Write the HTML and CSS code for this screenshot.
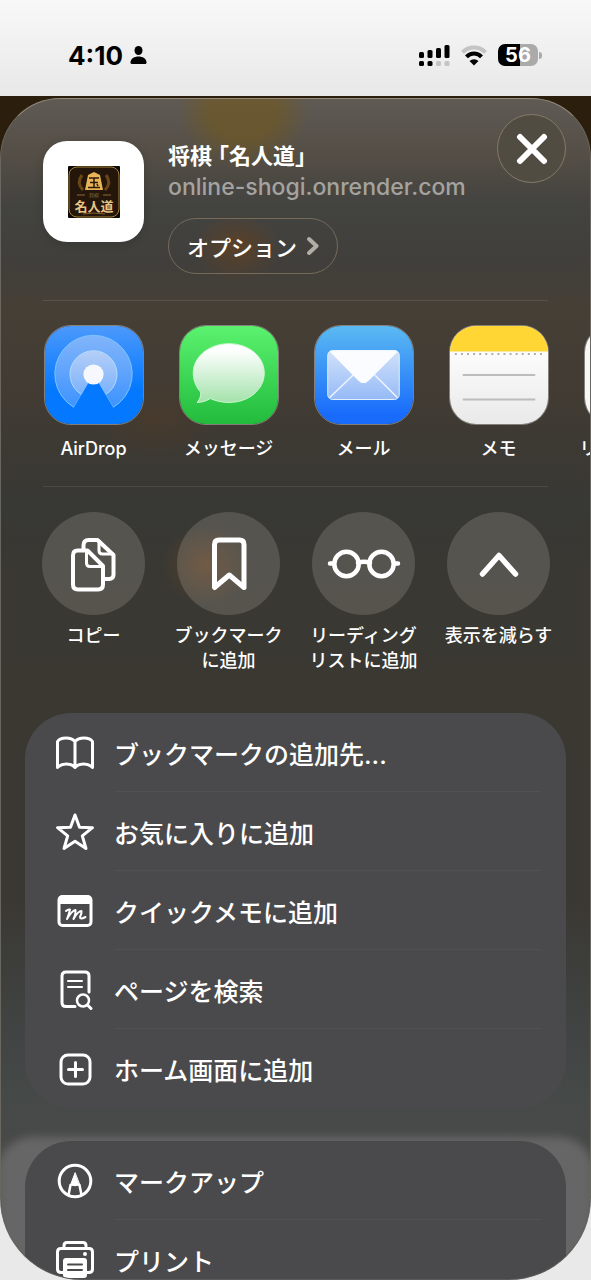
FILE: index.html
```html
<!DOCTYPE html>
<html lang="ja">
<head>
    <meta charset="UTF-8">
    <meta name="viewport" content="width=device-width, initial-scale=1.0">
    <title>将棋「名人道」</title>
    <link rel="stylesheet" href="styles.css">
</head>
<body>
    <!-- Status bar -->
    <div class="status-bar">
        <div class="status-left">
            <span class="time">4:10</span>
            <svg width="17" height="20" viewBox="0 0 16 20">
                <ellipse cx="8" cy="5.500" rx="4" ry="4.600"></ellipse>
                <path d="M0 17.500C0 13.500 4 11.500 8 11.500s8 2 8 6q0 1.500-1.500 1.500H1.500Q0 19 0 17.500z"></path>
            </svg>
        </div>
        <div class="status-right">
            <svg width="32" height="24" viewBox="0 0 32 24">
                <rect x="1" y="9" width="5" height="6" rx="1.500"></rect>
                <rect x="9.500" y="7" width="5" height="8" rx="1.500"></rect>
                <rect x="18" y="5" width="5" height="10" rx="1.500"></rect>
                <rect x="26.500" y="2" width="5" height="13" rx="1.500"></rect>
                <rect x="1" y="18" width="5" height="5" rx="1.500"></rect>
                <rect x="9.500" y="18" width="5" height="5" rx="1.500"></rect>
                <rect class="dim" x="18" y="18" width="5" height="5" rx="1.500"></rect>
                <rect class="dim" x="26.500" y="18" width="5" height="5" rx="1.500"></rect>
            </svg>
            <svg width="28" height="22" viewBox="0 0 26 22">
                <path class="wifi wifi-dim" d="M1.500 8.300a16 16 0 0 1 23 0"></path>
                <path class="wifi" d="M5.500 12.800a10.200 10.200 0 0 1 15 0"></path>
                <path d="M13 21.500l-4.500-4.500a6.400 6.400 0 0 1 9 0z"></path>
            </svg>
            <div class="battery"><span>56</span></div>
        </div>
    </div>

    <!-- Share sheet -->
    <main class="sheet">
        <button class="close" type="button" aria-label="閉じる">
            <svg width="32" height="32" viewBox="0 0 32 32"><path d="M4 4l24 24M28 4L4 28"></path></svg>
        </button>

        <header class="site">
            <div class="site-icon">
                <svg width="52" height="52" viewBox="0 0 52 52">
                    <rect width="52" height="52" rx="1" fill="#0b0805"></rect>
                    <rect x="1" y="1" width="50" height="50" rx="8" fill="#24160b" stroke="#a4803a"></rect>
                    <path d="M14 9q-6 8 1 15M38 9q6 8-1 15" fill="none" stroke="#6b4717" stroke-width="3"></path>
                    <path d="M26 6l6 3 3 15H17l3-15z" fill="#e9b458"></path>
                    <path d="M21 12h10M22 16.500h8M20 21.500h12M26 12v9M29 18l1 2" stroke="#2a1808" stroke-width="1.500"></path>
                    <path d="M9 29h8M35 29h8" stroke="#8d6b35"></path>
                    <text x="26" y="31" class="thumb-small">将棋</text>
                    <text x="26" y="45" class="thumb-name">名人道</text>
                    <path d="M15 48q11-2 22 0" fill="none" stroke="#8a6128"></path>
                </svg>
            </div>
            <div class="site-info">
                <h1>将棋<span class="quoted">「名人道」</span></h1>
                <p>online-shogi.onrender.com</p>
                <button class="options" type="button">
                    オプション
                    <svg width="12" height="20" viewBox="0 0 12 20"><path d="M2 3l7.500 7L2 17"></path></svg>
                </button>
            </div>
        </header>

        <!-- Apps -->
        <div class="strip apps">
            <button class="item" type="button">
                <svg class="app-icon" viewBox="0 0 100 100">
                    <defs>
                        <linearGradient id="airdrop-bg" x1="0" y1="0" x2="0" y2="1">
                            <stop offset="0" stop-color="#4c99fb"></stop>
                            <stop offset="0.650" stop-color="#0479ff"></stop>
                        </linearGradient>
                        <linearGradient id="airdrop-outer" x1="0" y1="0" x2="0" y2="1">
                            <stop offset="0" stop-color="#82b5fa"></stop>
                            <stop offset="1" stop-color="#3d93ff"></stop>
                        </linearGradient>
                        <linearGradient id="airdrop-mid" x1="0" y1="0" x2="0" y2="1">
                            <stop offset="0" stop-color="#b5cef7"></stop>
                            <stop offset="1" stop-color="#7bb2fb"></stop>
                        </linearGradient>
                    </defs>
                    <rect width="100" height="100" fill="url(#airdrop-bg)"></rect>
                    <path d="M49.500 49L29.500 83A39.500 39.500 0 1 1 69.500 83z" fill="url(#airdrop-outer)" stroke="#7cc5ff"></path>
                    <path d="M49.500 49L37.500 70A24 24 0 1 1 61.500 70z" fill="url(#airdrop-mid)" stroke="#b3dcff"></path>
                    <path d="M49.500 49L29 84H70z" fill="#0479ff"></path>
                    <circle cx="49.500" cy="49.500" r="10.300" fill="#f6f8fe"></circle>
                </svg>
                <span class="label">AirDrop</span>
            </button>
            <button class="item" type="button">
                <svg class="app-icon" viewBox="0 0 100 100">
                    <defs>
                        <linearGradient id="messages-bg" x1="0" y1="0" x2="0" y2="1">
                            <stop offset="0" stop-color="#5bf26f"></stop>
                            <stop offset="1" stop-color="#22bb3c"></stop>
                        </linearGradient>
                        <linearGradient id="messages-bubble" x1="0" y1="0" x2="0" y2="1">
                            <stop offset="0.100" stop-color="#ffffff"></stop>
                            <stop offset="1" stop-color="#a4e2ab"></stop>
                        </linearGradient>
                    </defs>
                    <rect width="100" height="100" fill="url(#messages-bg)"></rect>
                    <path d="M50 18C70 18 86 31 86 48S70 78 50 78C43 78 36.500 76.500 31 74C27 76.500 22 78 17.500 78C20.500 74.500 21.500 71 21 67.500C16.500 62 13.500 56 13.500 48C13.500 31 30 18 50 18z" fill="url(#messages-bubble)" stroke="#c9f7ce"></path>
                </svg>
                <span class="label">メッセージ</span>
            </button>
            <button class="item" type="button">
                <svg class="app-icon" viewBox="0 0 100 100">
                    <defs>
                        <linearGradient id="mail-bg" x1="0" y1="0" x2="0" y2="1">
                            <stop offset="0" stop-color="#5bbaf2"></stop>
                            <stop offset="0.900" stop-color="#196cfb"></stop>
                        </linearGradient>
                        <linearGradient id="mail-envelope" x1="0" y1="0" x2="0" y2="1">
                            <stop offset="0" stop-color="#d2e2fa"></stop>
                            <stop offset="1" stop-color="#95baf6"></stop>
                        </linearGradient>
                    </defs>
                    <rect width="100" height="100" fill="url(#mail-bg)"></rect>
                    <rect x="13" y="25" width="73" height="50" rx="5" fill="url(#mail-envelope)" stroke="#e4f1ff"></rect>
                    <path d="M15 73L39 50M84 73L61 50" stroke="#ecf4ff" stroke-width="1.600"></path>
                    <path d="M15 26Q17 25 19 25H81Q83 25 84.500 26L55 55.500Q49.500 61 44 55.500z" fill="#fbfcff"></path>
                </svg>
                <span class="label">メール</span>
            </button>
            <button class="item" type="button">
                <svg class="app-icon" viewBox="0 0 100 100">
                    <defs>
                        <linearGradient id="notes-bg" x1="0" y1="0" x2="0" y2="1">
                            <stop offset="0.300" stop-color="#fbfbfb"></stop>
                            <stop offset="1" stop-color="#e9e9ea"></stop>
                        </linearGradient>
                    </defs>
                    <rect width="100" height="100" fill="url(#notes-bg)"></rect>
                    <rect width="100" height="26" fill="#ffd634"></rect>
                    <path d="M5 28.500H96" stroke="#b3aea3" stroke-width="2" stroke-dasharray="2 4.200"></path>
                    <path d="M13 50H87M13 75H87" stroke="#bcbcbe" stroke-width="2"></path>
                </svg>
                <span class="label">メモ</span>
            </button>
            <button class="item" type="button">
                <svg class="app-icon" viewBox="0 0 100 100">
                    <rect width="100" height="100" fill="#f7f7f8"></rect>
                </svg>
                <span class="label">リマインダー</span>
            </button>
        </div>

        <!-- Quick actions -->
        <div class="strip actions">
            <button class="item" type="button">
                <span class="disc">
                    <svg width="52" height="56" viewBox="0 0 52 56">
                        <path d="M15.500 13V9.500Q15.500 4 20.500 4H29.500L45.500 19V38.500Q45.500 43 41 43H36"></path>
                        <path d="M31 5V14.500Q31 18 34.500 18H45" stroke-width="3"></path>
                        <path d="M9.500 14.500H19.500L35 30V48.500Q35 53.500 30 53.500H10Q5 53.500 5 48.500V19.500Q5 14.500 9.500 14.500z"></path>
                        <path d="M18.500 15.500V27Q18.500 30.500 22 30.500H34" stroke-width="3"></path>
                    </svg>
                </span>
                <span class="label">コピー</span>
            </button>
            <button class="item" type="button">
                <span class="disc">
                    <svg width="40" height="56" viewBox="0 0 40 56">
                        <path d="M5.500 8.500Q5.500 4 10 4H30.500Q35 4 35 8.500V51.500L20.300 39L5.500 51.500z" stroke-width="5"></path>
                    </svg>
                </span>
                <span class="label">ブックマーク<br>に追加</span>
            </button>
            <button class="item" type="button">
                <span class="disc">
                    <svg width="74" height="32" viewBox="0 0 74 32">
                        <circle cx="19.500" cy="16" r="12.200" stroke-width="4.500"></circle>
                        <circle cx="54.500" cy="16" r="12.200" stroke-width="4.500"></circle>
                        <path d="M31 15Q37 12.500 43 15M3 15.500H7M67 15.500H71" stroke-width="4.500"></path>
                    </svg>
                </span>
                <span class="label">リーディング<br>リストに追加</span>
            </button>
            <button class="item" type="button">
                <span class="disc">
                    <svg width="42" height="28" viewBox="0 0 42 28">
                        <path d="M4.500 24L21 5.500L37.500 24" stroke-width="5.500"></path>
                    </svg>
                </span>
                <span class="label">表示を減らす</span>
            </button>
        </div>

        <!-- Action list -->
        <div class="group">
            <button class="row" type="button">
                <svg width="40" height="40" viewBox="0 0 40 40">
                    <path d="M20 8.500Q17 5 11 5T2.500 8.500V34.500Q6 31 11.500 31T20 34.500Q23 31 28.500 31T37.500 34.500V8.500Q35 5 29 5T20 8.500V34"></path>
                </svg>
                <span>ブックマークの追加先...</span>
            </button>
            <button class="row" type="button">
                <svg width="40" height="40" viewBox="0 0 40 40">
                    <path d="M20 3L24.500 15.300L37.500 15.700L27.300 23.800L31 36.500L20 29.300L9 36.500L12.700 23.800L2.500 15.700L15.500 15.300z"></path>
                </svg>
                <span>お気に入りに追加</span>
            </button>
            <button class="row" type="button">
                <svg width="40" height="40" viewBox="0 0 40 40">
                    <rect x="4" y="5.500" width="32" height="29" rx="3.500"></rect>
                    <path d="M4 12V9Q4 5.500 8 5.500H32Q36 5.500 36 9V12z" fill="#ffffff" stroke-width="2"></path>
                    <path d="M11 20Q13 18 15 18.500Q14 23 12 28Q17 19.500 20.500 19Q21 22 18.500 28Q23 20 26.500 20Q27 22 25 26Q25 29 30.500 26" stroke-width="2"></path>
                </svg>
                <span>クイックメモに追加</span>
            </button>
            <button class="row" type="button">
                <svg width="40" height="40" viewBox="0 0 40 40">
                    <path d="M20 36.500H11Q7 36.500 7 32.500V6Q7 2 11 2H30Q34 2 34 6V22"></path>
                    <path d="M13 11H27M13 17H27" stroke-width="2"></path>
                    <circle cx="28" cy="30.500" r="6" stroke-width="2.500"></circle>
                    <path d="M32.500 35L36 38.500" stroke-width="3"></path>
                </svg>
                <span>ページを検索</span>
            </button>
            <button class="row" type="button">
                <svg width="40" height="40" viewBox="0 0 40 40">
                    <rect x="6" y="6" width="29" height="29" rx="7"></rect>
                    <path d="M20.500 13.500V27.500M13.500 20.500H27.500"></path>
                </svg>
                <span>ホーム画面に追加</span>
            </button>
        </div>

        <div class="group group-raised">
            <button class="row" type="button">
                <svg width="40" height="40" viewBox="0 0 40 40">
                    <circle cx="20" cy="20" r="15.800"></circle>
                    <path d="M13.500 34L15.500 24M26.500 34L24.500 24" stroke-width="2.500"></path>
                    <path d="M20 12L15.500 24Q20 25.500 24.500 24z" fill="#ffffff" stroke-width="1"></path>
                </svg>
                <span>マークアップ</span>
            </button>
            <button class="row" type="button">
                <svg width="40" height="40" viewBox="0 0 40 40">
                    <path d="M9 8V5.500Q9 2.500 12 2.500H28Q31 2.500 31 5.500V8"></path>
                    <path d="M8 32.500H6Q2.500 32.500 2.500 29V12Q2.500 8.500 6 8.500H34Q37.500 8.500 37.500 12V29Q37.500 32.500 34 32.500H32"></path>
                    <circle cx="30" cy="14" r="1" stroke-width="2"></circle>
                    <rect x="9" y="19" width="22" height="18" rx="2" fill="#ffffff" stroke-width="2"></rect>
                    <path class="ink" d="M13 24.500H27M13 30H27" stroke-width="2"></path>
                </svg>
                <span>プリント</span>
            </button>
        </div>
    </main>
</body>
</html>
```
FILE: styles.css
```css
* {
    box-sizing: border-box;
}

body {
    margin: 0;
    height: 100vh;
    display: flex;
    flex-direction: column;
    overflow: hidden;
    color: #ffffff;
    font-family: Inter, "Noto Sans CJK JP", sans-serif;
    background: linear-gradient(#2b1e0d 0, #2b1e0d 40%, #e9e9e9 80%);
}

h1, p {
    margin: 0;
}

button {
    padding: 0;
    border: 0;
    background: none;
    color: inherit;
    font: inherit;
    cursor: pointer;
}

svg {
    display: block;
    flex: none;
}

/* Status bar */
.status-bar {
    flex: none;
    height: 98px;
    padding: 14px 53px 0 68px;
    display: flex;
    align-items: center;
    justify-content: space-between;
    color: #000000;
    background: linear-gradient(#f8f8f8, #e8e8e8);
    border-bottom: 2px solid #2b1e0d;
}

.status-left, .status-right {
    display: flex;
    align-items: center;
    gap: 7px;
}

.status-right {
    gap: 10px;
}

.time {
    font-size: 26px;
    font-weight: 700;
}

.dim {
    fill: #c4c4c4;
}

.wifi {
    fill: none;
    stroke: #000000;
    stroke-width: 4;
}

.wifi-dim {
    stroke: #c4c4c4;
}

.battery {
    position: relative;
    width: 40px;
    height: 22px;
    border-radius: 7px;
    background: linear-gradient(90deg, #000000 56%, #aaaaaa 56%);
    color: #ffffff;
    font-size: 20px;
    font-weight: 700;
    line-height: 22px;
    text-align: center;
}

.battery::after {
    content: "";
    position: absolute;
    top: 8px;
    right: -4px;
    width: 3px;
    height: 7px;
    border-radius: 0 3px 3px 0;
    background: #aaaaaa;
}

/* Sheet */
.sheet {
    position: relative;
    z-index: 0;
    flex: 1;
    min-height: 0;
    overflow: hidden;
    border: 1px solid #6a6660;
    border-top-color: #948a7c;
    border-bottom-color: #5a5a5a;
    border-radius: 60px 60px 82px 82px;
    background:
        radial-gradient(ellipse 66px 60px at 242px 10px, rgba(112, 88, 32, 0.65) 50%, transparent),
        radial-gradient(ellipse 44px 34px at 236px 148px, rgba(110, 66, 24, 0.6), transparent),
        radial-gradient(ellipse 44px 40px at 205px 466px, rgba(120, 72, 30, 0.5), transparent),
        radial-gradient(ellipse 60px 40px at 155px 320px, rgba(90, 58, 28, 0.3), transparent),
        linear-gradient(#5f5a54 0, #534d45 60px, #434340 105px, #403f3c 160px, #463f36 205px, #413b33 300px, #383834 400px, #3b3832 600px, #3a3833 800px, #404341 920px, #454948 1000px, #484a48 1040px);
}

.close {
    position: absolute;
    top: 15px;
    right: 24px;
    z-index: 1;
    width: 69px;
    height: 69px;
    display: flex;
    align-items: center;
    justify-content: center;
    border: 1px solid #857a69;
    border-radius: 50%;
    background: #514c42;
}

.close svg {
    stroke: #ffffff;
    stroke-width: 6;
    stroke-linecap: round;
}

/* Site header */
.site {
    margin: 0 42px;
    padding: 42px 0 26px;
    display: flex;
    gap: 24px;
    border-bottom: 1px solid #57524b;
}

.site-icon {
    width: 101px;
    height: 101px;
    flex: none;
    display: flex;
    align-items: center;
    justify-content: center;
    border-radius: 24px;
    background: #ffffff;
    box-shadow: 0 2px 10px rgba(0, 0, 0, 0.15);
}

.thumb-small, .thumb-name {
    font-family: "Noto Sans CJK JP", sans-serif;
    font-size: 5px;
    fill: #8d6b35;
    text-anchor: middle;
}

.thumb-name {
    font-size: 13px;
    font-weight: 700;
    fill: #e8c584;
}

.site h1 {
    font-size: 22px;
    font-weight: 700;
    line-height: 30px;
}

/* half-width brackets */
.quoted {
    margin-left: 6px;
    font-feature-settings: "halt";
}

.site p {
    color: #a5a39f;
    font-size: 23px;
    font-weight: 500;
    line-height: 32px;
}

.options {
    height: 56px;
    margin-top: 15px;
    padding: 0 18px;
    display: flex;
    align-items: center;
    gap: 10px;
    border: 1px solid #766b5a;
    border-radius: 28px;
    font-size: 22px;
    font-weight: 500;
}

.options svg {
    fill: none;
    stroke: #b2aea6;
    stroke-width: 4;
    stroke-linecap: round;
    stroke-linejoin: round;
}

/* Icon strips */
.strip {
    display: flex;
    align-items: flex-start;
    padding-left: 25px;
    overflow: hidden;
}

.apps {
    position: relative;
    padding-top: 24px;
    padding-bottom: 26px;
}

.apps::after {
    content: "";
    position: absolute;
    left: 42px;
    right: 42px;
    bottom: 0;
    height: 1px;
    background: #4b4945;
}

.actions {
    padding-top: 25px;
    padding-bottom: 40px;
}

.item {
    flex: 0 0 135px;
    display: flex;
    flex-direction: column;
    align-items: center;
    gap: 11px;
}

.actions .item {
    gap: 8px;
}

.label {
    font-size: 18px;
    font-weight: 500;
    line-height: 25px;
    white-space: nowrap;
}

.app-icon {
    width: 100px;
    height: 100px;
    border: 1px solid rgba(255, 255, 255, 0.35);
    border-radius: 27px;
}

.disc {
    width: 103px;
    height: 103px;
    display: flex;
    align-items: center;
    justify-content: center;
    border-radius: 50%;
    background: rgba(255, 250, 235, 0.15);
}

.disc svg, .row svg {
    fill: none;
    stroke: #ffffff;
    stroke-width: 4;
    stroke-linecap: round;
    stroke-linejoin: round;
}

/* Grouped list */
.group {
    position: relative;
    margin: 0 24px 33px;
    border-radius: 46px;
    background: #4a4a4c;
}

.group-raised {
    margin-bottom: 0;
    border-radius: 46px 46px 0 0;
}

/* lighter plate behind the lower group */
.group-raised::before {
    content: "";
    position: absolute;
    z-index: -1;
    inset: -4px -28px -40px;
    border-radius: 36px;
    background: #666666;
    filter: blur(4px);
}

.row {
    position: relative;
    width: 100%;
    height: 79px;
    padding: 0 30px;
    display: flex;
    align-items: center;
    gap: 19px;
    font-size: 25px;
    font-weight: 500;
    text-align: left;
}

.row svg {
    stroke-width: 3;
}

.row .ink {
    stroke: #4a4a4c;
}

.row:not(:last-child)::after {
    content: "";
    position: absolute;
    left: 89px;
    right: 25px;
    bottom: 0;
    height: 1px;
    background: #515154;
}
```
